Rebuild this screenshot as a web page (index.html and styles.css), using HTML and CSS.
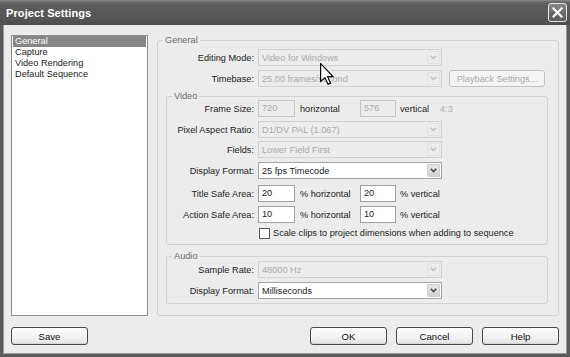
FILE: index.html
```html
<!DOCTYPE html>
<html>
<head>
<meta charset="utf-8">
<title>Project Settings</title>
<link rel="stylesheet" href="styles.css">
</head>
<body>
<div class="window">
  <div class="titlebar">
    <span class="title">Project Settings</span>
    <span class="close"><svg width="11" height="11" viewBox="0 0 11 11"><path d="M1.5 1.5 L9.5 9.5 M9.5 1.5 L1.5 9.5" stroke="#fff" stroke-width="2.2" stroke-linecap="square"/></svg></span>
  </div>
  <div class="content">
    <div class="main">
      <ul class="nav">
        <li class="sel">General</li>
        <li>Capture</li>
        <li>Video Rendering</li>
        <li>Default Sequence</li>
      </ul>
      <div class="group general">
        <span class="gtitle">General</span>
        <div class="row">
          <span class="lbl">Editing Mode:</span>
          <div class="combo dis"><span class="val">Video for Windows</span><span class="arrow"><svg width="7" height="5" viewBox="0 0 7 5"><path d="M0.8 0.8 L3.5 3.6 L6.2 0.8" fill="none" stroke-width="1.6"/></svg></span></div>
        </div>
        <div class="row mt4">
          <span class="lbl">Timebase:</span>
          <div class="combo dis"><span class="val">25.00 frames/second</span><span class="arrow"><svg width="7" height="5" viewBox="0 0 7 5"><path d="M0.8 0.8 L3.5 3.6 L6.2 0.8" fill="none" stroke-width="1.6"/></svg></span></div>
          <span class="btn dis playback">Playback Settings...</span>
        </div>

        <div class="group sub video">
          <span class="gtitle">Video</span>
          <div class="row">
            <span class="lbl">Frame Size:</span>
            <span class="field dis w37">720</span>
            <span class="unit">horizontal</span>
            <span class="field dis w36">576</span>
            <span class="unit2">vertical</span>
            <span class="ratio">4:3</span>
          </div>
          <div class="row mt4">
            <span class="lbl">Pixel Aspect Ratio:</span>
            <div class="combo dis"><span class="val">D1/DV PAL (1.067)</span><span class="arrow"><svg width="7" height="5" viewBox="0 0 7 5"><path d="M0.8 0.8 L3.5 3.6 L6.2 0.8" fill="none" stroke-width="1.6"/></svg></span></div>
          </div>
          <div class="row mt3">
            <span class="lbl">Fields:</span>
            <div class="combo dis"><span class="val">Lower Field First</span><span class="arrow"><svg width="7" height="5" viewBox="0 0 7 5"><path d="M0.8 0.8 L3.5 3.6 L6.2 0.8" fill="none" stroke-width="1.6"/></svg></span></div>
          </div>
          <div class="row mt4">
            <span class="lbl">Display Format:</span>
            <div class="combo"><span class="val">25 fps Timecode</span><span class="arrow"><svg width="7" height="5" viewBox="0 0 7 5"><path d="M0.8 0.8 L3.5 3.6 L6.2 0.8" fill="none" stroke-width="1.6"/></svg></span></div>
          </div>
          <div class="row mt6">
            <span class="lbl">Title Safe Area:</span>
            <span class="field w37">20</span>
            <span class="unit">% horizontal</span>
            <span class="field w36">20</span>
            <span class="unit2">% vertical</span>
          </div>
          <div class="row mt4">
            <span class="lbl">Action Safe Area:</span>
            <span class="field w37">10</span>
            <span class="unit">% horizontal</span>
            <span class="field w36">10</span>
            <span class="unit2">% vertical</span>
          </div>
          <div class="row check-row mt4">
            <span class="lbl"></span>
            <span class="checkbox"></span>
            <span class="check-text">Scale clips to project dimensions when adding to sequence</span>
          </div>
        </div>

        <div class="group sub audio">
          <span class="gtitle">Audio</span>
          <div class="row">
            <span class="lbl">Sample Rate:</span>
            <div class="combo dis"><span class="val">48000 Hz</span><span class="arrow"><svg width="7" height="5" viewBox="0 0 7 5"><path d="M0.8 0.8 L3.5 3.6 L6.2 0.8" fill="none" stroke-width="1.6"/></svg></span></div>
          </div>
          <div class="row mt4">
            <span class="lbl">Display Format:</span>
            <div class="combo"><span class="val">Milliseconds</span><span class="arrow"><svg width="7" height="5" viewBox="0 0 7 5"><path d="M0.8 0.8 L3.5 3.6 L6.2 0.8" fill="none" stroke-width="1.6"/></svg></span></div>
          </div>
        </div>
      </div>
    </div>
    <div class="footer">
      <span class="btn">Save</span>
      <span class="spacer"></span>
      <span class="btn">OK</span>
      <span class="btn">Cancel</span>
      <span class="btn">Help</span>
    </div>
  </div>
  <svg class="cursor" width="14" height="22" viewBox="0 0 12 19"><path d="M0.5 0.5 L0.5 16 L4.2 12.6 L6.9 18.4 L9.1 17.4 L6.5 11.8 L11.3 11.8 Z" fill="#fff" stroke="#000" stroke-width="1" stroke-linejoin="miter"/></svg>
</div>
</body>
</html>
```

FILE: styles.css
```css
* { box-sizing: border-box; }
html, body { margin: 0; padding: 0; }
body {
  width: 570px;
  height: 357px;
  overflow: hidden;
  font-family: "Liberation Sans", Arial, sans-serif;
  font-size: 9.2px;
  color: #1c1c1c;
  background: #ececec;
}
.window {
  position: relative;
  width: 570px;
  height: 357px;
  display: flex;
  flex-direction: column;
}
.titlebar {
  height: 25px;
  flex: none;
  display: flex;
  align-items: center;
  justify-content: space-between;
  padding: 0 3px 0 6px;
  background: linear-gradient(#8a8a8a 0, #6a6a6a 2px, #5c5c5c 5px, #565656 18px, #4e4e4e 25px);
}
.title {
  color: #fff;
  font-weight: bold;
  font-size: 11px;
  letter-spacing: 0.1px;
  padding-top: 1px;
}
.close {
  width: 19px;
  height: 19px;
  border: 1px solid #e8e8e8;
  border-radius: 3px;
  background: linear-gradient(#8a8a8a, #666 60%, #5e5e5e);
  display: flex;
  align-items: center;
  justify-content: center;
}
.content {
  flex: 1;
  display: flex;
  flex-direction: column;
  background: #ececec;
  border: 3px solid #5a5a5a;
  border-top: none;
  padding: 10px 8px 9px;
  box-shadow: inset 1px 0 #9a9a9a, inset -1px 0 #9a9a9a, inset 0 -1px #9a9a9a;
}
.main {
  display: flex;
  gap: 9px;
}
.nav {
  width: 137px;
  flex: none;
  margin: 0;
  padding: 0 1px;
  list-style: none;
  background: #fff;
  border: 1px solid #8e8e8e;
}
.nav li {
  height: 11px;
  line-height: 11px;
  padding-left: 2px;
  white-space: nowrap;
}
.nav li.sel {
  background: #868686;
  color: #fff;
}
.group {
  position: relative;
  border: 1px solid #d2d2d2;
  border-radius: 3px;
}
.general {
  flex: 1;
  margin-top: 5px;
  padding: 8px 10px 11px 0;
}
.gtitle {
  position: absolute;
  top: -7px;
  left: 5px;
  padding: 0 2px;
  line-height: 12px;
  background: #ececec;
  color: #6a6a6a;
}
.sub {
  margin-left: 8px;
}
.video {
  margin-top: 9px;
  padding: 3px 0 5px;
}
.audio {
  margin-top: 11px;
  padding: 4px 0 4px;
}
.row {
  display: flex;
  align-items: center;
  height: 17px;
  white-space: nowrap;
}
.mt3 { margin-top: 3px; }
.mt4 { margin-top: 4px; }
.mt6 { margin-top: 6px; }
.lbl {
  width: 96px;
  margin-right: 4px;
  text-align: right;
  flex: none;
}
.sub .lbl { width: 87px; }
.combo {
  width: 184px;
  height: 17px;
  display: flex;
  align-items: center;
  background: #fff;
  border: 1px solid #a4a4a4;
}
.combo .val {
  flex: 1;
  padding-left: 3px;
  overflow: hidden;
}
.combo .arrow {
  width: 13px;
  height: 13px;
  margin-right: 1px;
  display: flex;
  align-items: center;
  justify-content: center;
  background: linear-gradient(#e6e6e6, #d2d2d2);
  border: 1px solid #cfcfcf;
  border-radius: 1px;
}
.combo .arrow path { stroke: #4a4a4a; }
.combo.dis {
  background: #ececec;
  border-color: #d0d0d0;
  color: #ababab;
}
.combo.dis .arrow {
  background: #ececec;
  border-color: #e2e2e2;
}
.combo.dis .arrow path { stroke: #c4c4c4; }
.field {
  height: 17px;
  flex: none;
  background: #fff;
  border: 1px solid #a0a0a0;
  padding-left: 3px;
  line-height: 15px;
}
.field.dis {
  background: #ececec;
  border-color: #c6c6c6;
  color: #ababab;
}
.w37 { width: 37px; }
.w36 { width: 36px; }
.unit { width: 60px; margin-left: 5px; flex: none; }
.unit2 { width: 40px; margin-left: 4px; flex: none; }
.ratio { color: #adadad; }
.check-row { height: 12px; }
.checkbox {
  width: 11px;
  height: 11px;
  margin-left: 1px;
  background: #fff;
  border: 1px solid #5a5a5a;
  flex: none;
}
.check-text { margin-left: 3px; }
.btn {
  width: 77px;
  height: 18px;
  flex: none;
  display: flex;
  align-items: center;
  justify-content: center;
  border: 1px solid #4a4a4a;
  border-radius: 3px;
  background: linear-gradient(#fdfdfd, #f2f2f2 60%, #e2e2e2);
  box-shadow: inset 0 -1px #d6d6d6;
  color: #111;
  font-size: 9.6px;
}
.btn.dis {
  color: #ababab;
  border-color: #c2c2c2;
  background: #f4f4f4;
  box-shadow: none;
}
.playback {
  width: 96px;
  height: 17px;
  margin-left: 7px;
  font-size: 9.2px;
}
.footer {
  display: flex;
  gap: 9px;
  margin-top: 11px;
}
.spacer { flex: 1; }
.cursor {
  position: absolute;
  left: 320px;
  top: 63px;
}
```
